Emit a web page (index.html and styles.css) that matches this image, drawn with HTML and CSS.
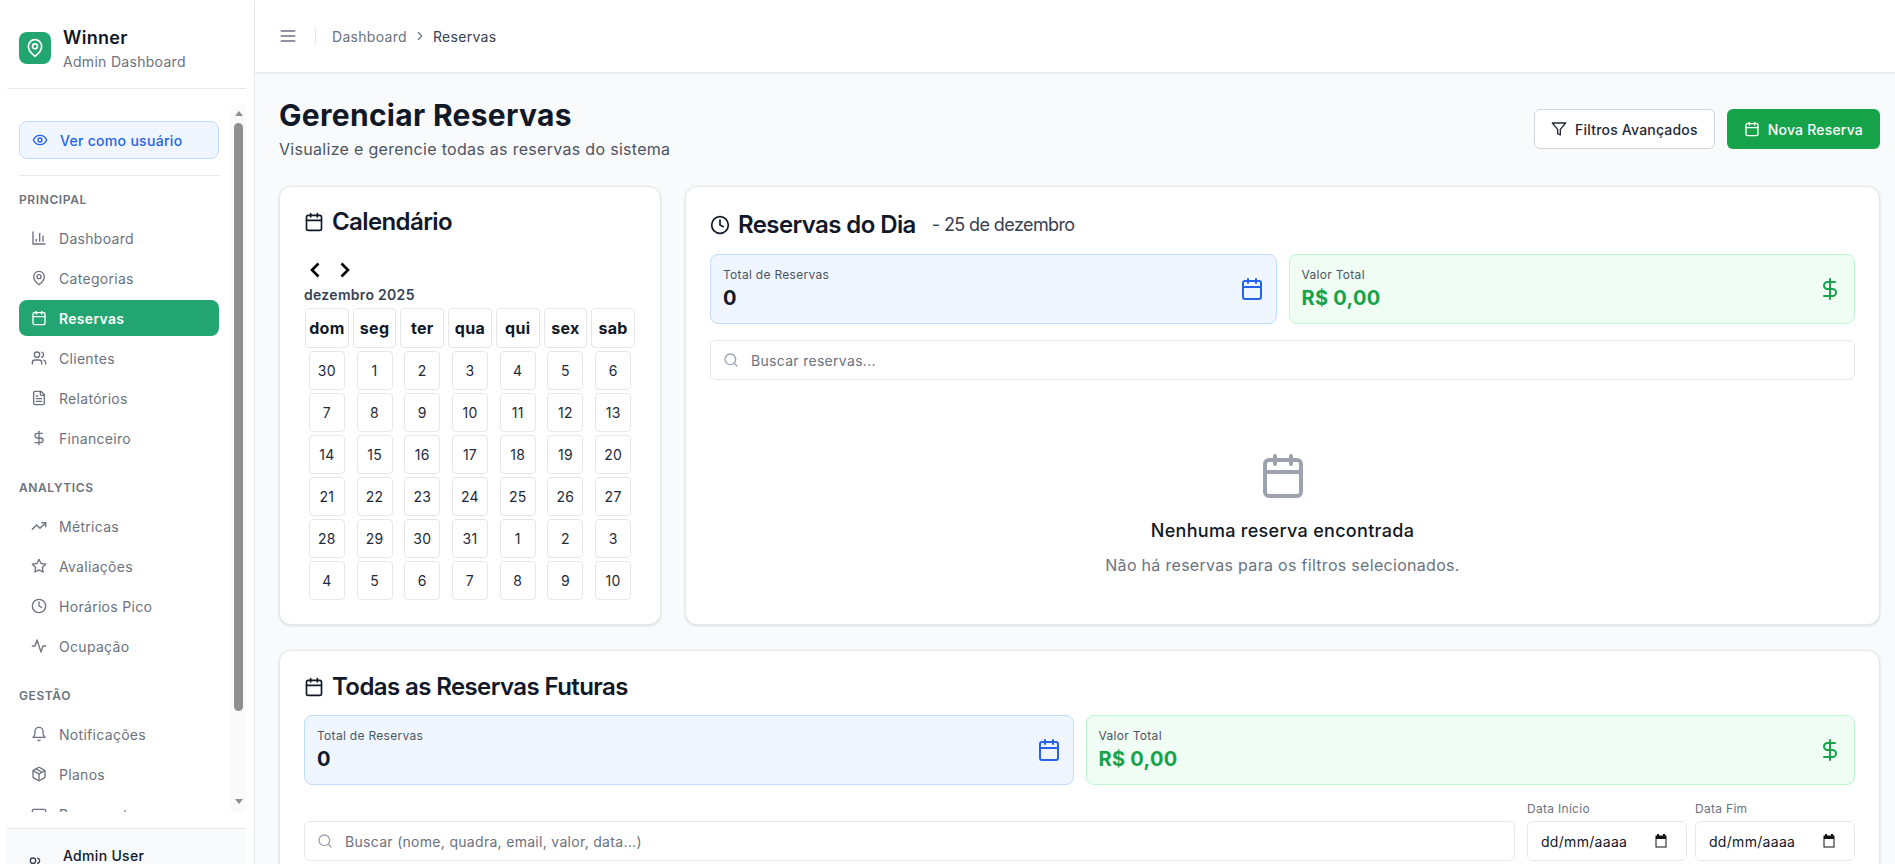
FILE: index.html
```html
<!DOCTYPE html>
<html lang="pt-BR">
<head>
<meta charset="utf-8">
<title>Gerenciar Reservas</title>
<link rel="stylesheet" href="styles.css">
</head>
<body>
<svg class="sprite" aria-hidden="true">
  <symbol id="i-pin" viewBox="0 0 24 24"><path d="M20 10c0 6-8 12-8 12s-8-6-8-12a8 8 0 0 1 16 0Z"/><circle cx="12" cy="10" r="3"/></symbol>
  <symbol id="i-eye" viewBox="0 0 24 24"><path d="M2 12s3-7 10-7 10 7 10 7-3 7-10 7-10-7-10-7Z"/><circle cx="12" cy="12" r="3"/></symbol>
  <symbol id="i-chart" viewBox="0 0 24 24"><path d="M3 3v18h18"/><path d="M18 17V9"/><path d="M13 17V5"/><path d="M8 17v-3"/></symbol>
  <symbol id="i-cal" viewBox="0 0 24 24"><path d="M8 2v4"/><path d="M16 2v4"/><rect width="18" height="18" x="3" y="4" rx="2"/><path d="M3 10h18"/></symbol>
  <symbol id="i-users" viewBox="0 0 24 24"><path d="M16 21v-2a4 4 0 0 0-4-4H6a4 4 0 0 0-4 4v2"/><circle cx="9" cy="7" r="4"/><path d="M22 21v-2a4 4 0 0 0-3-3.87"/><path d="M16 3.13a4 4 0 0 1 0 7.75"/></symbol>
  <symbol id="i-file" viewBox="0 0 24 24"><path d="M15 2H6a2 2 0 0 0-2 2v16a2 2 0 0 0 2 2h12a2 2 0 0 0 2-2V7Z"/><path d="M14 2v4a2 2 0 0 0 2 2h4"/><path d="M10 9H8"/><path d="M16 13H8"/><path d="M16 17H8"/></symbol>
  <symbol id="i-dollar" viewBox="0 0 24 24"><path d="M12 2v20"/><path d="M17 5H9.5a3.5 3.5 0 0 0 0 7h5a3.5 3.5 0 0 1 0 7H6"/></symbol>
  <symbol id="i-trend" viewBox="0 0 24 24"><path d="M22 7l-8.5 8.5-5-5L2 17"/><path d="M16 7h6v6"/></symbol>
  <symbol id="i-star" viewBox="0 0 24 24"><path d="M12 2l3.09 6.26L22 9.27l-5 4.87 1.18 6.88L12 17.77l-6.18 3.25L7 14.14 2 9.27l6.91-1.01L12 2Z"/></symbol>
  <symbol id="i-clock" viewBox="0 0 24 24"><circle cx="12" cy="12" r="10"/><path d="M12 6v6l4 2"/></symbol>
  <symbol id="i-activity" viewBox="0 0 24 24"><path d="M22 12h-4l-3 9L9 3l-3 9H2"/></symbol>
  <symbol id="i-bell" viewBox="0 0 24 24"><path d="M6 8a6 6 0 0 1 12 0c0 7 3 9 3 9H3s3-2 3-9"/><path d="M10.3 21a1.94 1.94 0 0 0 3.4 0"/></symbol>
  <symbol id="i-box" viewBox="0 0 24 24"><path d="m7.5 4.27 9 5.15"/><path d="M21 8a2 2 0 0 0-1-1.73l-7-4a2 2 0 0 0-2 0l-7 4A2 2 0 0 0 3 8v8a2 2 0 0 0 1 1.73l7 4a2 2 0 0 0 2 0l7-4A2 2 0 0 0 21 16Z"/><path d="m3.3 7 8.7 5 8.7-5"/><path d="M12 22V12"/></symbol>
  <symbol id="i-card" viewBox="0 0 24 24"><rect width="20" height="14" x="2" y="5" rx="2"/><path d="M2 10h20"/></symbol>
  <symbol id="i-menu" viewBox="0 0 24 24"><path d="M4 12h16"/><path d="M4 6h16"/><path d="M4 18h16"/></symbol>
  <symbol id="i-right" viewBox="0 0 24 24"><path d="m9 18 6-6-6-6"/></symbol>
  <symbol id="i-search" viewBox="0 0 24 24"><circle cx="11" cy="11" r="8"/><path d="m21 21-4.3-4.3"/></symbol>
  <symbol id="i-filter" viewBox="0 0 24 24"><path d="M22 3H2l8 9.46V19l4 2v-8.54L22 3Z"/></symbol>
  <symbol id="i-nav-left" viewBox="0 0 20 20"><path d="M13.5 3.5 7 10l6.5 6.5"/></symbol>
  <symbol id="i-nav-right" viewBox="0 0 20 20"><path d="M6.5 3.5 13 10l-6.5 6.5"/></symbol>
</svg>

<div class="app">
  <aside class="sidebar">
    <div class="brand">
      <div class="brand-logo"><svg class="ic ic-20"><use href="#i-pin"/></svg></div>
      <div class="brand-text">
        <div class="brand-name">Winner</div>
        <div class="brand-sub">Admin Dashboard</div>
      </div>
    </div>

    <div class="nav-wrap">
      <nav class="nav">
        <a class="view-as"><svg class="ic ic-16"><use href="#i-eye"/></svg><span>Ver como usuário</span></a>
        <div class="nav-sep"></div>

        <div class="nav-label">PRINCIPAL</div>
        <div class="nav-group">
          <a class="nav-item"><svg class="ic ic-16"><use href="#i-chart"/></svg>Dashboard</a>
          <a class="nav-item"><svg class="ic ic-16"><use href="#i-pin"/></svg>Categorias</a>
          <a class="nav-item active"><svg class="ic ic-16"><use href="#i-cal"/></svg>Reservas</a>
          <a class="nav-item"><svg class="ic ic-16"><use href="#i-users"/></svg>Clientes</a>
          <a class="nav-item"><svg class="ic ic-16"><use href="#i-file"/></svg>Relatórios</a>
          <a class="nav-item"><svg class="ic ic-16"><use href="#i-dollar"/></svg>Financeiro</a>
        </div>

        <div class="nav-label">ANALYTICS</div>
        <div class="nav-group">
          <a class="nav-item"><svg class="ic ic-16"><use href="#i-trend"/></svg>Métricas</a>
          <a class="nav-item"><svg class="ic ic-16"><use href="#i-star"/></svg>Avaliações</a>
          <a class="nav-item"><svg class="ic ic-16"><use href="#i-clock"/></svg>Horários Pico</a>
          <a class="nav-item"><svg class="ic ic-16"><use href="#i-activity"/></svg>Ocupação</a>
        </div>

        <div class="nav-label">GESTÃO</div>
        <div class="nav-group">
          <a class="nav-item"><svg class="ic ic-16"><use href="#i-bell"/></svg>Notificações</a>
          <a class="nav-item"><svg class="ic ic-16"><use href="#i-box"/></svg>Planos</a>
          <a class="nav-item"><svg class="ic ic-16"><use href="#i-card"/></svg>Pagamentos</a>
        </div>
      </nav>
      <div class="scrollbar">
        <span class="sb-arrow sb-up"></span>
        <span class="sb-thumb"></span>
        <span class="sb-arrow sb-down"></span>
      </div>
    </div>

    <div class="user-box">
      <svg class="ic ic-16 user-icon"><use href="#i-users"/></svg>
      <div class="user-name">Admin User</div>
    </div>
  </aside>

  <div class="main">
    <header class="topbar">
      <svg class="ic ic-20 topbar-menu"><use href="#i-menu"/></svg>
      <span class="topbar-sep"></span>
      <span class="crumb">Dashboard</span>
      <svg class="ic ic-14 crumb-chev"><use href="#i-right"/></svg>
      <span class="crumb crumb-current">Reservas</span>
    </header>

    <main class="content">
      <div class="page-head">
        <div>
          <h1 class="page-title">Gerenciar Reservas</h1>
          <p class="page-sub">Visualize e gerencie todas as reservas do sistema</p>
        </div>
        <div class="page-actions">
          <button class="btn btn-outline"><svg class="ic ic-16"><use href="#i-filter"/></svg>Filtros Avançados</button>
          <button class="btn btn-primary"><svg class="ic ic-16"><use href="#i-cal"/></svg>Nova Reserva</button>
        </div>
      </div>

      <div class="top-grid">
        <section class="card">
          <h2 class="card-title"><svg class="ic ic-20"><use href="#i-cal"/></svg>Calendário</h2>
          <div class="cal-nav">
            <svg class="ic-nav"><use href="#i-nav-left"/></svg>
            <svg class="ic-nav"><use href="#i-nav-right"/></svg>
          </div>
          <div class="cal-caption">dezembro 2025</div>
          <div class="cal-grid">
            <div class="cal-head">dom</div><div class="cal-head">seg</div><div class="cal-head">ter</div><div class="cal-head">qua</div><div class="cal-head">qui</div><div class="cal-head">sex</div><div class="cal-head">sab</div>
            <div class="cal-day">30</div><div class="cal-day">1</div><div class="cal-day">2</div><div class="cal-day">3</div><div class="cal-day">4</div><div class="cal-day">5</div><div class="cal-day">6</div>
            <div class="cal-day">7</div><div class="cal-day">8</div><div class="cal-day">9</div><div class="cal-day">10</div><div class="cal-day">11</div><div class="cal-day">12</div><div class="cal-day">13</div>
            <div class="cal-day">14</div><div class="cal-day">15</div><div class="cal-day">16</div><div class="cal-day">17</div><div class="cal-day">18</div><div class="cal-day">19</div><div class="cal-day">20</div>
            <div class="cal-day">21</div><div class="cal-day">22</div><div class="cal-day">23</div><div class="cal-day">24</div><div class="cal-day">25</div><div class="cal-day">26</div><div class="cal-day">27</div>
            <div class="cal-day">28</div><div class="cal-day">29</div><div class="cal-day">30</div><div class="cal-day">31</div><div class="cal-day">1</div><div class="cal-day">2</div><div class="cal-day">3</div>
            <div class="cal-day">4</div><div class="cal-day">5</div><div class="cal-day">6</div><div class="cal-day">7</div><div class="cal-day">8</div><div class="cal-day">9</div><div class="cal-day">10</div>
          </div>
        </section>

        <section class="card">
          <h2 class="card-title card-title-day"><svg class="ic ic-20"><use href="#i-clock"/></svg>Reservas do Dia<span class="card-title-date">- 25 de dezembro</span></h2>
          <div class="stats">
            <div class="stat stat-blue">
              <div><div class="stat-label">Total de Reservas</div><div class="stat-value">0</div></div>
              <svg class="ic ic-24"><use href="#i-cal"/></svg>
            </div>
            <div class="stat stat-green">
              <div><div class="stat-label">Valor Total</div><div class="stat-value">R$ 0,00</div></div>
              <svg class="ic ic-24"><use href="#i-dollar"/></svg>
            </div>
          </div>
          <label class="search">
            <svg class="ic ic-16"><use href="#i-search"/></svg>
            <input class="search-input" type="text" placeholder="Buscar reservas...">
          </label>
          <div class="empty">
            <svg class="ic ic-48"><use href="#i-cal"/></svg>
            <h3 class="empty-title">Nenhuma reserva encontrada</h3>
            <p class="empty-text">Não há reservas para os filtros selecionados.</p>
          </div>
        </section>
      </div>

      <section class="card card-future">
        <h2 class="card-title card-title-future"><svg class="ic ic-20"><use href="#i-cal"/></svg>Todas as Reservas Futuras</h2>
        <div class="stats stats-future">
          <div class="stat stat-blue">
            <div><div class="stat-label">Total de Reservas</div><div class="stat-value">0</div></div>
            <svg class="ic ic-24"><use href="#i-cal"/></svg>
          </div>
          <div class="stat stat-green">
            <div><div class="stat-label">Valor Total</div><div class="stat-value">R$ 0,00</div></div>
            <svg class="ic ic-24"><use href="#i-dollar"/></svg>
          </div>
        </div>
        <div class="filters">
          <label class="search search-grow">
            <svg class="ic ic-16"><use href="#i-search"/></svg>
            <input class="search-input" type="text" placeholder="Buscar (nome, quadra, email, valor, data...)">
          </label>
          <div class="date-filter">
            <div class="date-label">Data Início</div>
            <div class="date-field"><span>dd/mm/aaaa</span><svg class="date-icon" viewBox="0 0 14 14"><path d="M3 0h2v1.5h4V0h2v1.5h1.5v12h-11v-12H3V0Zm-.5 5v7.5h9V5h-9Z"/></svg></div>
          </div>
          <div class="date-filter">
            <div class="date-label">Data Fim</div>
            <div class="date-field"><span>dd/mm/aaaa</span><svg class="date-icon" viewBox="0 0 14 14"><path d="M3 0h2v1.5h4V0h2v1.5h1.5v12h-11v-12H3V0Zm-.5 5v7.5h9V5h-9Z"/></svg></div>
          </div>
        </div>
      </section>
    </main>
  </div>
</div>
</body>
</html>
```
FILE: styles.css
```css
* { box-sizing: border-box; }
html, body { margin: 0; height: 864px; overflow: hidden; }
body { font-family: Inter, "Liberation Sans", sans-serif; color: #111827; background: #f9fafb; font-size: 14px; letter-spacing: .3px; }
h1, h2, h3, p { margin: 0; }
.sprite { display: none; }

.ic { fill: none; stroke: currentColor; stroke-width: 2; stroke-linecap: round; stroke-linejoin: round; flex: none; }
.ic-14 { width: 14px; height: 14px; }
.ic-16 { width: 16px; height: 16px; }
.ic-20 { width: 20px; height: 20px; }
.ic-24 { width: 24px; height: 24px; }
.ic-48 { width: 48px; height: 48px; }

.app { display: flex; height: 864px; }

/* Sidebar */
.sidebar { width: 255px; flex: none; height: 864px; background: #fff; border-right: 1px solid #e9ebef; padding: 0 8px 0 7px; display: flex; flex-direction: column; }
.brand { height: 89px; flex: none; border-bottom: 1px solid #e5e7eb; padding: 32px 12px 0; display: flex; gap: 12px; }
.brand-logo { width: 32px; height: 32px; border-radius: 8px; background: #22a570; color: #fff; display: flex; align-items: center; justify-content: center; }
.brand-text { margin-top: -7px; }
.brand-name { font-size: 18px; line-height: 26px; font-weight: 600; color: #111827; }
.brand-sub { font-size: 14px; line-height: 20px; margin-top: 1px; color: #6b7280; }

.nav-wrap { position: relative; margin-top: 16px; height: 707px; flex: none; overflow: hidden; }
.nav { padding: 16px 12px 0; width: 224px; }
.view-as { display: flex; align-items: center; gap: 12px; height: 38px; padding: 0 12px; background: #eff6ff; border: 1px solid #bfdbfe; border-radius: 8px; color: #2563eb; font-weight: 500; }
.nav-sep { height: 1px; background: #e5e7eb; margin: 16px 0; }
.nav-label { font-size: 12px; line-height: 16px; font-weight: 600; letter-spacing: .6px; color: #6b7280; margin-bottom: 12px; }
.nav-group { display: flex; flex-direction: column; gap: 4px; margin-bottom: 24px; }
.nav-item { display: flex; align-items: center; gap: 12px; height: 36px; padding: 0 12px; border-radius: 8px; color: #6b7280; }
.nav-item.active { background: #22a570; color: #fff; font-weight: 600; }

.scrollbar { position: absolute; top: 0; right: 0; bottom: 0; width: 15px; background: #fafafa; display: flex; flex-direction: column; align-items: center; }
.sb-arrow { width: 0; height: 0; border-left: 4.5px solid transparent; border-right: 4.5px solid transparent; }
.sb-up { margin-top: 6px; border-bottom: 5px solid #8f8f8f; }
.sb-down { margin-top: 88px; border-top: 5px solid #8f8f8f; }
.sb-thumb { width: 9px; height: 588px; margin-top: 7px; background: #8f8f8f; border-radius: 5px; }

.user-box { position: relative; margin-top: 16px; flex: 1; background: #f9fafb; border-top: 1px solid #e5e7eb; padding: 17px 0 0 56px; overflow: hidden; }
.user-name { font-size: 14px; line-height: 20px; font-weight: 500; color: #111827; }
.user-icon { position: absolute; left: 20px; top: 27px; color: #374151; }

/* Main */
.main { flex: 1; min-width: 0; display: flex; flex-direction: column; }
.topbar { height: 73px; flex: none; background: #fff; border-bottom: 1px solid #e5e7eb; box-shadow: 0 1px 2px rgba(0,0,0,.05); display: flex; align-items: center; padding: 0 23px; color: #6b7280; }
.topbar-sep { width: 1px; height: 16px; background: #e5e7eb; margin: 0 16px 0 17px; }
.crumb { font-size: 14px; color: #6b7280; }
.crumb-chev { margin: 0 6px; color: #6b7280; }
.crumb-current { color: #374151; }

.content { flex: 1; padding: 24px 15px 0 24px; overflow: hidden; }
.page-head { display: flex; align-items: center; justify-content: space-between; margin-bottom: 25px; }
.page-title { font-size: 30px; line-height: 36px; font-weight: 700; color: #111827; }
.page-sub { font-size: 16px; line-height: 24px; margin-top: 4px; color: #4b5563; }
.page-actions { display: flex; gap: 12px; }
.btn { display: flex; align-items: center; gap: 8px; height: 40px; padding: 0 16px; border-radius: 6px; font: 500 14px Inter, sans-serif; letter-spacing: .2px; border: 1px solid transparent; }
.btn-outline { background: #fff; border-color: #d1d5db; color: #1f2937; }
.btn-primary { background: #16a34a; color: #fff; }

.top-grid { display: grid; grid-template-columns: 382px 1fr; gap: 24px; margin-bottom: 25px; }
.card { background: #fff; border: 1px solid #e5e7eb; border-radius: 12px; box-shadow: 0 1px 3px rgba(0,0,0,.1), 0 1px 2px -1px rgba(0,0,0,.1); padding: 19px 24px 24px; }
.card-title { display: flex; align-items: center; gap: 8px; font-size: 24px; line-height: 32px; font-weight: 600; letter-spacing: -.6px; color: #111827; }
.card-title-day { margin-top: 3px; margin-bottom: 13px; }
.card-title-date { font-size: 18px; font-weight: 400; letter-spacing: -.6px; color: #374151; margin-left: 8px; }
.card-title-future { margin-top: 1px; margin-bottom: 12px; }

.cal-nav { display: flex; gap: 10px; margin: 22px 0 0 1px; color: #000; }
.ic-nav { width: 20px; height: 20px; fill: none; stroke: currentColor; stroke-width: 2.6; }
.cal-caption { font-size: 14px; line-height: 20px; font-weight: 600; color: #374151; margin: 5px 0 3px; }
.cal-grid { display: grid; grid-template-columns: repeat(7, 1fr); column-gap: 4px; row-gap: 3px; grid-template-rows: 40px; grid-auto-rows: 39px; margin: 0 1px; }
.cal-head { display: flex; align-items: center; justify-content: center; border: 1px solid #e5e7eb; border-radius: 4px; font-size: 16px; font-weight: 700; color: #111827; }
.cal-day { justify-self: center; width: 36px; display: flex; align-items: center; justify-content: center; border: 1px solid #e5e7eb; border-radius: 4px; font-size: 14px; color: #1f2937; }

.stats { display: grid; grid-template-columns: 1fr 1fr; gap: 12px; margin-bottom: 16px; }
.stats-future { margin-bottom: 0; }
.stat { height: 70px; padding: 0 12px; border-radius: 8px; border: 1px solid; display: flex; align-items: center; justify-content: space-between; }
.stat-blue { background: #eff6ff; border-color: #bfdbfe; }
.stat-blue .ic { color: #2563eb; }
.stat-green { background: #f0fdf4; border-color: #bbf7d0; }
.stat-green .ic { color: #16a34a; }
.stat-green .stat-value { color: #16a34a; }
.stat-label { font-size: 12px; line-height: 16px; color: #4b5563; }
.stat-value { font-size: 20px; line-height: 28px; margin-top: 1px; font-weight: 700; color: #111827; }

.search { display: flex; align-items: center; gap: 12px; height: 40px; padding: 0 12px; background: #fff; border: 1px solid #e5e7eb; border-radius: 6px; color: #9ca3af; }
.search-input { flex: 1; min-width: 0; border: 0; outline: 0; padding: 1px 0 0; background: transparent; font: 400 14px Inter, sans-serif; letter-spacing: inherit; color: #111827; }
.search-input::placeholder { color: #6b7280; opacity: 1; }

.empty { padding-top: 72px; display: flex; flex-direction: column; align-items: center; }
.empty .ic { color: #9ca3af; }
.empty-title { font-size: 18px; line-height: 28px; font-weight: 500; color: #111827; margin-top: 17px; }
.empty-text { font-size: 16px; line-height: 24px; color: #6b7280; margin-top: 8px; }

.filters { display: flex; align-items: flex-end; gap: 12px; margin-top: 16px; }
.search-grow { flex: 1; }
.date-filter { width: 160px; }
.date-filter + .date-filter { margin-left: -4px; }
.date-label { font-size: 12px; line-height: 16px; color: #6b7280; margin-bottom: 4px; }
.date-field { height: 40px; display: flex; align-items: center; justify-content: space-between; padding: 0 18px 0 13px; background: #fff; border: 1px solid #e5e7eb; border-radius: 6px; font-size: 14px; color: #111827; }
.date-icon { width: 14px; height: 14px; fill: #111; }
```
